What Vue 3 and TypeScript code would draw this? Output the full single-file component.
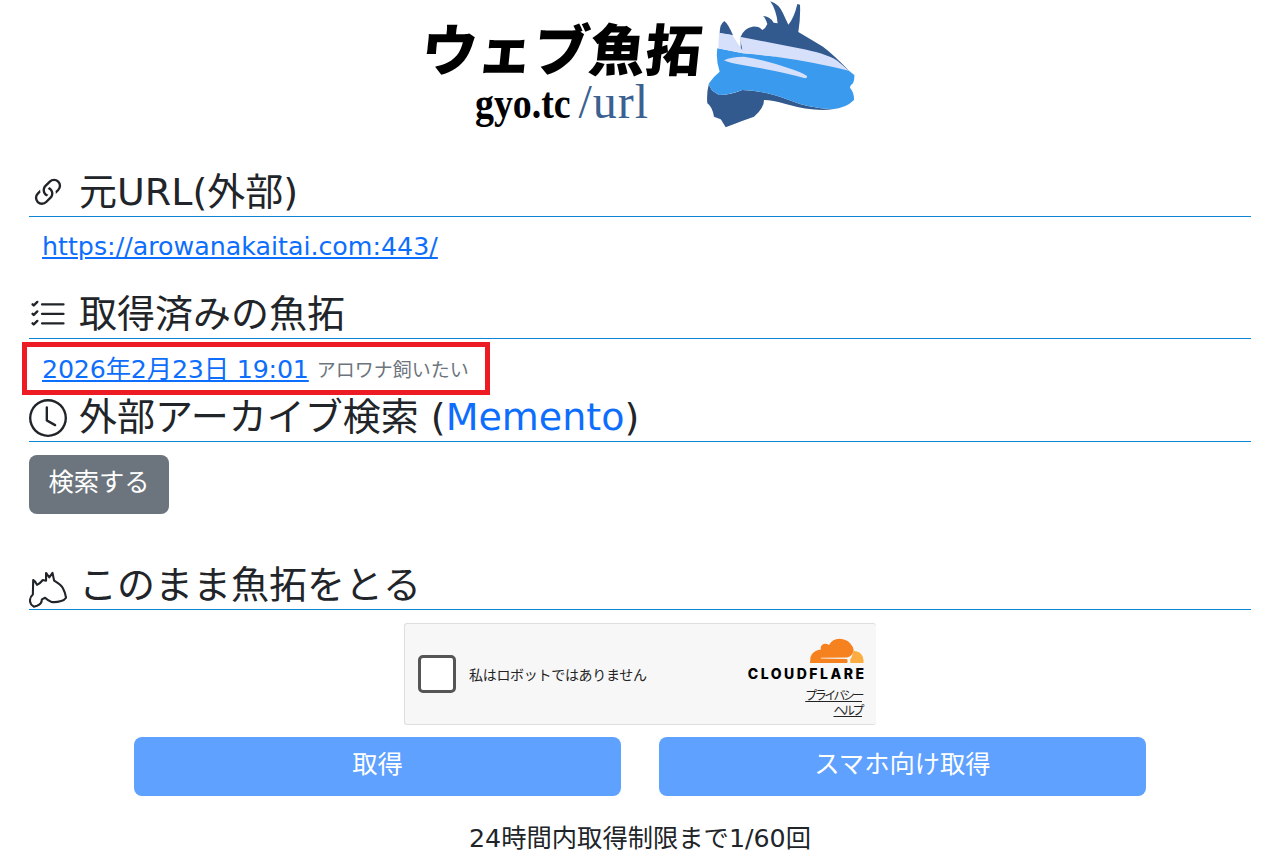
<script setup lang="ts">
const fishDark = "M125 110 Q135 85 160 80 Q180 78 190 90 Q200 85 205 72 Q200 55 192 48 Q212 48 224 68 L236 70 Q232 30 214 4 Q240 12 252 40 Q262 62 268 74 Q285 55 295 12 L303 14 Q305 50 298 96 Q335 118 372 140 Q405 165 450 212 L125 150 Z";
const fin = "M62 100 Q62 72 76 63 Q88 72 102 106 Z";
const band = "M60 98 L100 105 Q115 130 130 150 L122 110 Q200 125 300 145 Q380 160 415 182 L450 212 Q340 185 230 170 Q180 165 132 160 L58 145 Z";
const blue = "M55 145 L132 160 Q340 175 450 212 L466 225 Q467 240 462 250 Q450 258 454 265 Q466 280 465 300 Q440 325 400 328 Q330 325 270 300 Q190 270 130 270 Q90 285 60 285 Q30 270 30 250 Q45 228 62 215 Q50 180 55 145 Z";
const inner = "M75 181 Q95 170 135 170 Q200 180 270 205 Q310 218 324 228 Q326 236 315 234 Q250 215 130 195 Q95 190 75 181 Z";
const belly = "M30 250 Q30 270 60 285 Q95 285 130 270 Q190 270 270 300 Q330 325 400 328 Q340 335 260 312 Q220 300 195 300 Q195 325 165 350 Q140 358 80 382 Q70 365 65 358 L45 350 Q40 320 25 310 Q22 280 30 250 Z";
</script>

<template>
  <div class="page">
    <header class="logo">
      <div class="logo-text">
        <div class="logo-title">ウェブ魚拓</div>
        <div class="logo-sub"><span class="gyo">gyo.tc</span><span class="url">/url</span></div>
      </div>
      <svg class="fish" viewBox="0 0 495 390" width="165" height="130" aria-hidden="true">
        <path :d="fishDark" fill="#335a8e" />
        <path :d="fin" fill="#335a8e" />
        <path :d="belly" fill="#335a8e" />
        <path :d="blue" fill="#3a9aed" />
        <path :d="band" fill="#d6e0fb" />
        <path :d="inner" fill="#d6e0fb" />
      </svg>
    </header>

    <h4 class="head first">
      <svg class="ico" viewBox="0 0 16 16" fill="#212529"><path d="M4.715 6.542 3.343 7.914a3 3 0 1 0 4.243 4.243l1.828-1.829A3 3 0 0 0 8.586 5.5L8 6.086a1 1 0 0 0-.154.199 2 2 0 0 1 .861 3.337L6.88 11.45a2 2 0 1 1-2.83-2.83l.793-.792a4 4 0 0 1-.128-1.287z"/><path d="M6.586 4.672A3 3 0 0 0 7.414 9.5l.775-.776a2 2 0 0 1-.896-3.346L9.12 3.55a2 2 0 1 1 2.83 2.83l-.793.792c.112.42.155.855.128 1.287l1.372-1.372a3 3 0 1 0-4.243-4.243z"/></svg>
      <span>元URL(外部)</span>
    </h4>
    <div class="row"><a href="#">https://arowanakaitai.com:443/</a></div>

    <h4 class="head second">
      <svg class="ico" viewBox="0 0 16 16" fill="#212529"><path fill-rule="evenodd" d="M5 11.5a.5.5 0 0 1 .5-.5h9a.5.5 0 0 1 0 1h-9a.5.5 0 0 1-.5-.5m0-4a.5.5 0 0 1 .5-.5h9a.5.5 0 0 1 0 1h-9a.5.5 0 0 1-.5-.5m0-4a.5.5 0 0 1 .5-.5h9a.5.5 0 0 1 0 1h-9a.5.5 0 0 1-.5-.5M3.854 2.146a.5.5 0 0 1 0 .708l-1.5 1.5a.5.5 0 0 1-.708 0l-.5-.5a.5.5 0 1 1 .708-.708L2 3.293l1.146-1.147a.5.5 0 0 1 .708 0m0 4a.5.5 0 0 1 0 .708l-1.5 1.5a.5.5 0 0 1-.708 0l-.5-.5a.5.5 0 1 1 .708-.708L2 7.293l1.146-1.147a.5.5 0 0 1 .708 0m0 4a.5.5 0 0 1 0 .708l-1.5 1.5a.5.5 0 0 1-.708 0l-.5-.5a.5.5 0 0 1 .708-.708l.146.147 1.146-1.147a.5.5 0 0 1 .708 0"/></svg>
      <span>取得済みの魚拓</span>
    </h4>
    <div class="marked"><a href="#">2026年2月23日 19:01</a><small>アロワナ飼いたい</small></div>

    <h4 class="head third">
      <svg class="ico" viewBox="0 0 16 16" fill="#212529"><path d="M8 3.5a.5.5 0 0 0-1 0V9a.5.5 0 0 0 .252.434l3.5 2a.5.5 0 0 0 .496-.868L8 8.71z"/><path d="M8 16A8 8 0 1 0 8 0a8 8 0 0 0 0 16m7-8A7 7 0 1 1 1 8a7 7 0 0 1 14 0"/></svg>
      <span>外部アーカイブ検索 (<a class="plain" href="#">Memento</a>)</span>
    </h4>
    <button class="btn grey" type="button">検索する</button>

    <h4 class="head fourth">
      <svg class="ico fishline" viewBox="25 42 118 118" fill="none" stroke="#212529" stroke-width="6.500" stroke-linejoin="round" stroke-linecap="round"><path d="M37 115 L38 70 Q45 74 50 85 Q60 80 68 70 L78 72 L78 48 L88 62 L98 48 L103 72 Q125 85 130 95 Q138 110 140 125 Q135 133 125 135 Q108 140 95 138 Q85 135 75 125 L65 130 Q65 145 50 150 L40 153 Q28 145 28 135 Q28 122 37 115 Z"/></svg>
      <span>このまま魚拓をとる</span>
    </h4>

    <div class="widget-wrap">
      <div class="widget">
        <span class="check"></span>
        <span class="robot">私はロボットではありません</span>
        <div class="cf">
          <svg class="cloud" viewBox="0 0 56 26" width="56" height="26" aria-hidden="true">
            <path fill="#f6821f" d="M39 25 Q40.500 22 38.500 21 L13 20.500 Q12.500 20 13 19.700 L39 19.400 Q43.500 18.500 45 14.500 L45.700 12.300 Q44 4 36 1.500 Q26 -1.500 21 7 Q17 4.500 14 7 Q12 9 13 11.500 Q5 12 2.500 19 L2 25 Z"/>
            <path fill="#fbad41" d="M46.500 13 L45.500 13 L43.500 19.500 Q41.500 21 42.500 25 L55.500 25 Q56 18 51.500 14.500 Q49 13 46.500 13 Z"/>
          </svg>
          <div class="cf-name">CLOUDFLARE</div>
          <a class="cf-link" href="#">プライバシー</a>
          <a class="cf-link" href="#">ヘルプ</a>
        </div>
      </div>
    </div>

    <div class="actions">
      <button class="btn blue" type="button">取得</button>
      <button class="btn blue" type="button">スマホ向け取得</button>
    </div>

    <p class="limit">24時間内取得制限まで1/60回</p>
  </div>
</template>

<style>
html, body { margin: 0; overflow: hidden; background: #fff; }
</style>

<style scoped>
.page {
  box-sizing: border-box;
  width: 1280px;
  height: 866px;
  padding: 0 29px;
  overflow: hidden;
  color: #212529;
  font-family: "DejaVu Sans", "Noto Sans CJK JP", sans-serif;
  font-size: 25.3px;
  line-height: 1.5;
}
.logo { display: flex; justify-content: center; height: 130px; padding-left: 3px; }
.logo-text { width: 283px; padding-top: 14px; color: #000; }
.logo-title {
  font-family: "Noto Sans CJK JP", sans-serif;
  font-weight: 900;
  font-size: 56px;
  line-height: 66px;
  white-space: nowrap;
  padding-left: 2px;
  transform: skewX(-6deg);
}
.logo-sub { display: flex; align-items: baseline; line-height: 44px; padding-left: 55px; }
.gyo { display: inline-block; width: 104px; font-family: "Liberation Serif", serif; font-weight: 700; font-size: 44px; transform: scaleX(0.86); transform-origin: left; }
.url { display: inline-block; font-family: "Liberation Serif", serif; font-size: 48px; letter-spacing: 1px; color: #3b6191; transform: scaleX(1); transform-origin: left; }
.fish { display: block; margin-left: -4px; }
.head {
  display: flex;
  align-items: center;
  gap: 12px;
  margin: 0;
  border-bottom: 1px solid #0d84d6;
  font-weight: 400;
  font-size: 38px;
  line-height: 1.2;
  height: 47px;
}
.first { margin-top: 39px; }
.second { margin-top: 15px; }
.third { margin-top: 0; height: 46px; }
.fourth { margin-top: 48px; }
.ico { width: 38px; height: 38px; flex: none; }
.fishline { align-self: flex-end; width: 38px; height: 38px; }
.plain { color: #0d6efd; text-decoration: none; }
.row { padding: 11px 13px 0; height: 48px; }
a { color: #0d6efd; }
.marked {
  box-sizing: border-box;
  width: 468px;
  height: 53px;
  margin: 3px 0 0 -7px;
  border: 5px solid #ed1c24;
  padding: 4px 15px 0;
  white-space: nowrap;
}
.marked a { letter-spacing: -0.17px; }
.marked small { margin-left: 8px; font-size: 19px; color: #6c757d; position: relative; top: -1px; }
.btn {
  box-sizing: border-box;
  height: 59px;
  border: 0;
  padding: 0 0 3px;
  border-radius: 8px;
  color: #fff;
  font: inherit;
}
.grey { display: block; width: 140px; margin-top: 13px; background: #6c757d; }
.widget-wrap { display: flex; justify-content: center; margin-top: 13px; }
.widget {
  box-sizing: border-box;
  display: flex;
  align-items: center;
  width: 472px;
  height: 102px;
  padding: 0 12px 0 13px;
  background: #f7f7f7;
  border: 1px solid #dedede;
  border-right: 0;
  border-radius: 3px;
  color: #232323;
  font-family: "Noto Sans CJK JP", sans-serif;
}
.check { box-sizing: border-box; width: 38px; height: 38px; background: #fff; border: 3.500px solid #555; border-radius: 5px; flex: none; }
.robot { margin-left: 13px; font-size: 14px; line-height: 20px; letter-spacing: -0.3px; flex: 1; white-space: nowrap; }
.cf { display: flex; flex-direction: column; align-items: flex-end; width: 117px; line-height: 1; align-self: flex-start; padding-top: 14px; }
.cloud { display: block; }
.cf-name { font-family: Inter, sans-serif; font-weight: 800; font-size: 14px; line-height: 14px; letter-spacing: 2.500px; margin-right: -2.500px; color: #000; margin-top: 3px; white-space: nowrap; }
.cf-link { color: #232323; font-size: 12px; line-height: 15px; letter-spacing: -2.500px; margin-right: 2px; white-space: nowrap; }
.cf-name + .cf-link { margin-top: 6px; }
.actions { display: flex; justify-content: center; gap: 38px; margin-top: 12px; }
.blue { width: 487px; background: #5fa1ff; }
.limit { margin: 24px 0 0; text-align: center; }
</style>
